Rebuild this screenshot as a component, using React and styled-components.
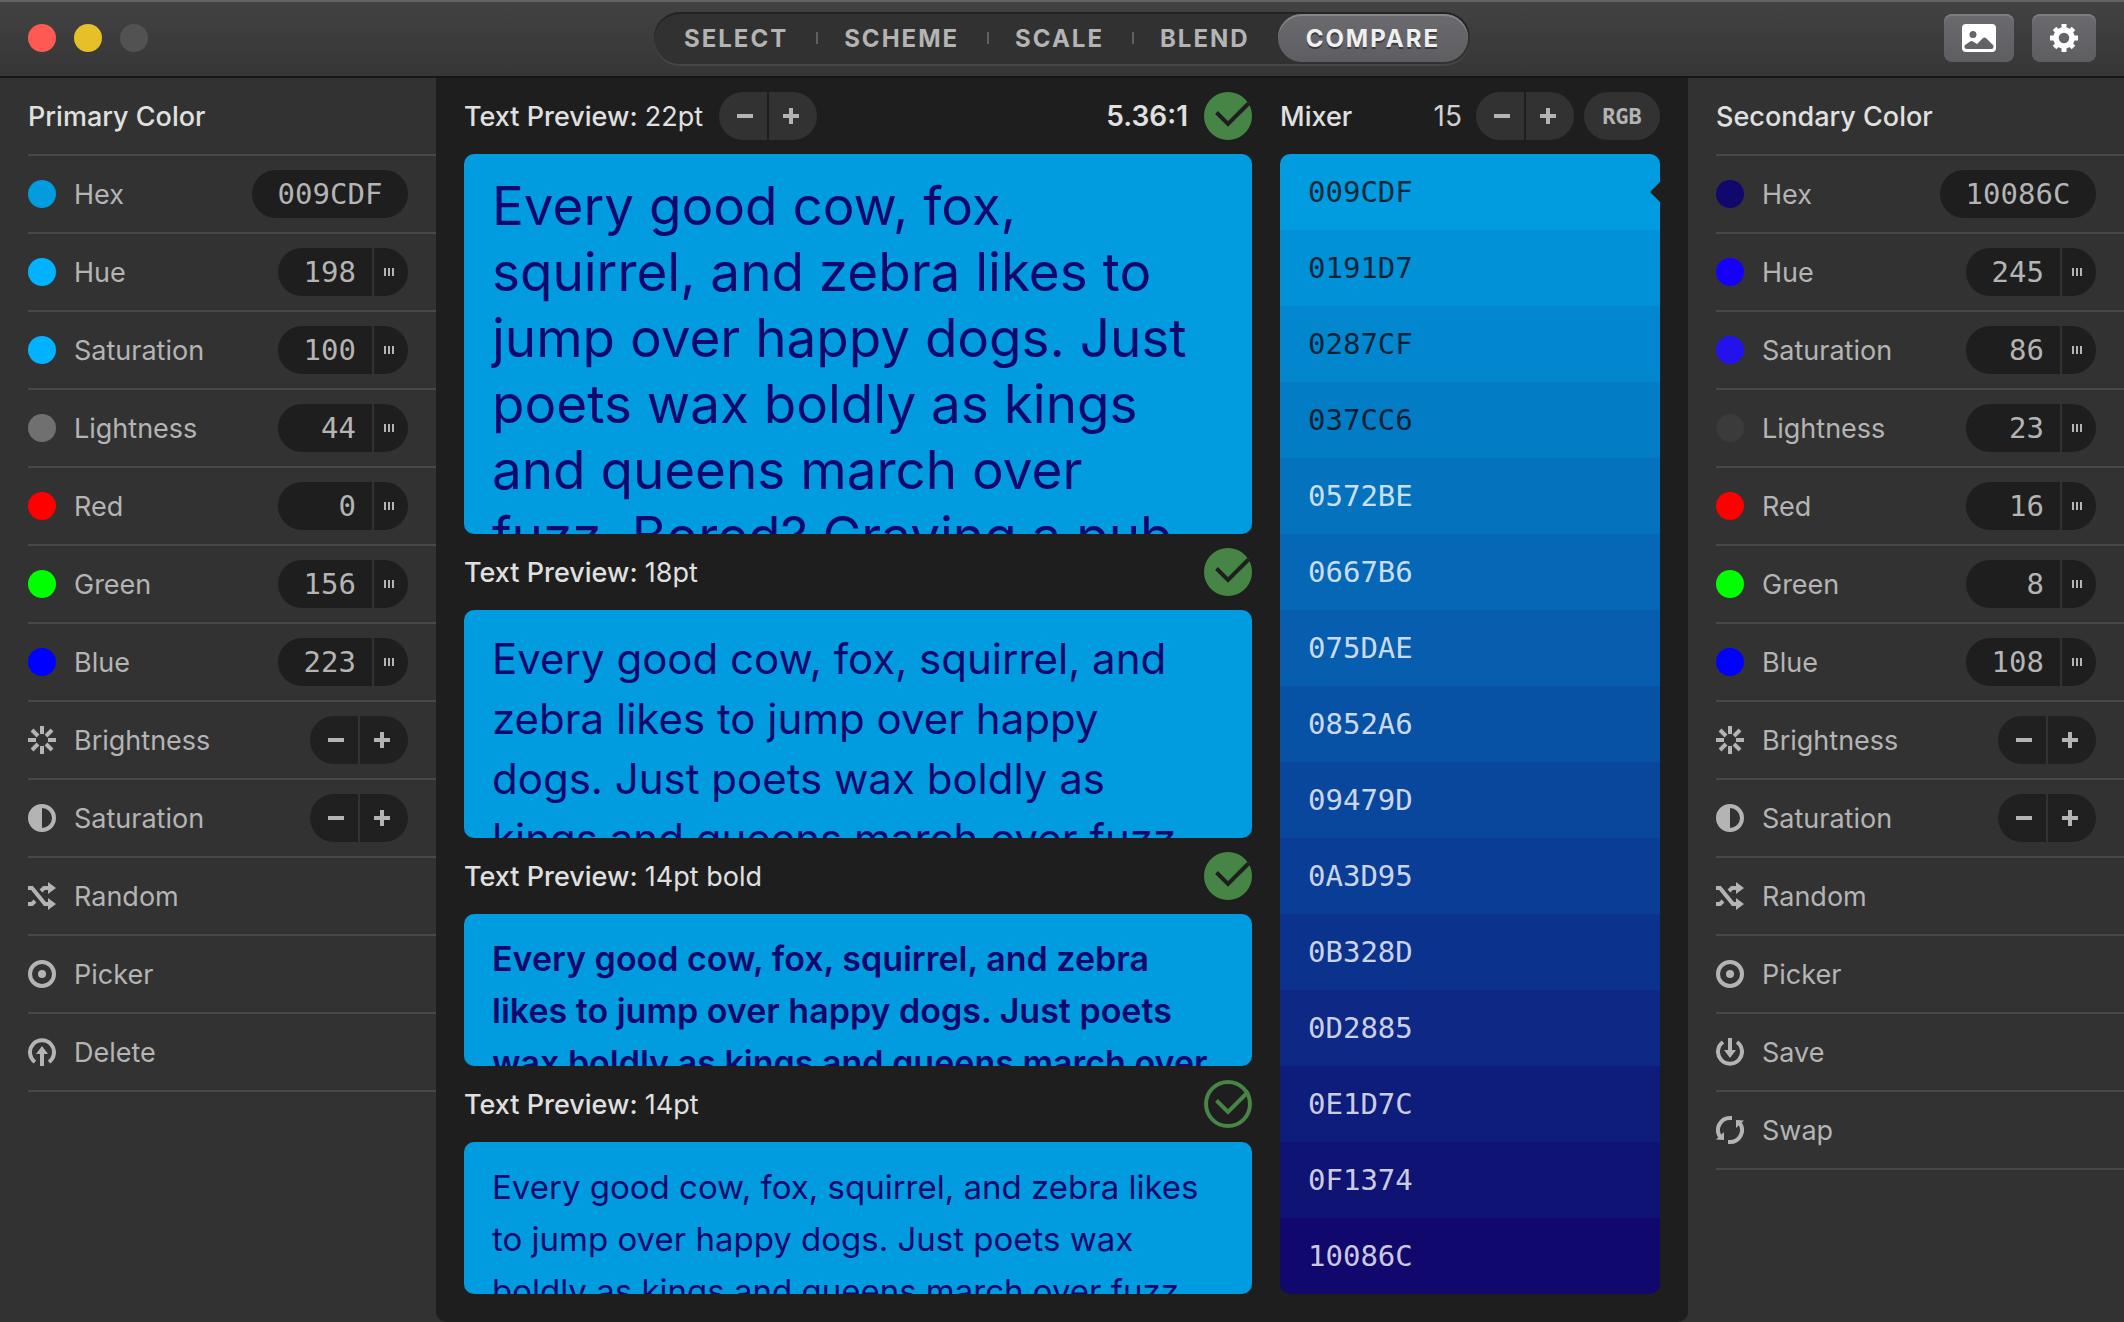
import React from 'react'
import styled, { createGlobalStyle } from "styled-components"

const SANS = `Inter, "Liberation Sans", sans-serif`;
const MONO = `"DejaVu Sans Mono", "Liberation Mono", monospace`;

const previewText = "Every good cow, fox, squirrel, and zebra likes to jump over happy dogs. Just poets wax boldly as kings and queens march over fuzz. Bored? Craving a pub";

const previews = [
  { id: "p22", size: "22pt", grow: 5, font: 53, line: 66, weight: 400, stepper: true, ratio: "5.36:1" },
  { id: "p18", size: "18pt", grow: 3, font: 42, line: 60, weight: 400 },
  { id: "p14b", size: "14pt bold", grow: 2, font: 34, line: 52, weight: 600 },
  { id: "p14", size: "14pt", grow: 2, font: 33, line: 52, weight: 400, outline: true },
];

const mixes = [
  "009CDF", "0191D7", "0287CF", "037CC6", "0572BE", "0667B6", "075DAE", "0852A6",
  "09479D", "0A3D95", "0B328D", "0D2885", "0E1D7C", "0F1374", "10086C",
];

const primary = {
  id: "primary",
  title: "Primary Color",
  hex: "009CDF",
  values: [
    { name: "Hue", value: "198", color: "#00b2ff" },
    { name: "Saturation", value: "100", color: "#00b2ff" },
    { name: "Lightness", value: "44", color: "#707070" },
    { name: "Red", value: "0", color: "#ff0000" },
    { name: "Green", value: "156", color: "#00ff00" },
    { name: "Blue", value: "223", color: "#0000ff" },
  ],
  actions: ["Random", "Picker", "Delete"],
};

const secondary = {
  id: "secondary",
  title: "Secondary Color",
  hex: "10086C",
  values: [
    { name: "Hue", value: "245", color: "#1500ff" },
    { name: "Saturation", value: "86", color: "#2412ed" },
    { name: "Lightness", value: "23", color: "#3b3b3b" },
    { name: "Red", value: "16", color: "#ff0000" },
    { name: "Green", value: "8", color: "#00ff00" },
    { name: "Blue", value: "108", color: "#0000ff" },
  ],
  actions: ["Random", "Picker", "Save", "Swap"],
};

const shapes = {
  Brightness: (
    <g stroke="currentColor" strokeWidth="4">
      <path d="M14 0v8M14 20v8M0 14h8M20 14h8M4 4l6 6M18 18l6 6M24 4l-6 6M10 18l-6 6" />
    </g>
  ),
  Saturation: (
    <g>
      <circle cx="14" cy="14" r="12" fill="none" stroke="currentColor" strokeWidth="4" />
      <path d="M14 1a13 13 0 0 0 0 26z" fill="currentColor" />
    </g>
  ),
  Random: (
    <g>
      <path d="M0 6h4L17 22h4M13 9l3-3h5M0 22h4l3-3" fill="none" stroke="currentColor" strokeWidth="4" />
      <path d="M20 0l8 6-8 6zM20 16l8 6-8 6z" fill="currentColor" />
    </g>
  ),
  Picker: (
    <g>
      <circle cx="14" cy="14" r="12" fill="none" stroke="currentColor" strokeWidth="4" />
      <circle cx="14" cy="14" r="4" fill="currentColor" />
    </g>
  ),
  Delete: (
    <g>
      <path d="M7 24a12 12 0 1 1 14 0" fill="none" stroke="currentColor" strokeWidth="4" />
      <path d="M14 8l6 8h-4v12h-4V16H8z" fill="currentColor" />
    </g>
  ),
  Save: (
    <g>
      <path d="M7 4a12 12 0 1 0 14 0" fill="none" stroke="currentColor" strokeWidth="4" />
      <path d="M14 20l6-8h-4V0h-4v12H8z" fill="currentColor" />
    </g>
  ),
  Swap: (
    <g>
      <path d="M16 2h-2A12 12 0 0 0 4 20.6M12 26h2A12 12 0 0 0 24 7.4" fill="none" stroke="currentColor" strokeWidth="4" />
      <path d="M0 23.500l8-7.500v8zM28 4.500l-8 7.500V4z" fill="currentColor" />
    </g>
  ),
};

const Icon = ({ name }) => (
  <svg width="28" height="28" viewBox="0 0 28 28" aria-hidden="true">{shapes[name]}</svg>
);

const Check = ({ outline }) => (
  <svg width="48" height="48" viewBox="0 0 48 48" role="img" aria-label="Pass">
    {outline
      ? <circle cx="24" cy="24" r="22" fill="none" stroke="#478547" strokeWidth="4" />
      : <circle cx="24" cy="24" r="24" fill="#478547" />}
    <path d="M12.500 20.500L24 32 44.500 11.500" fill="none" stroke={outline ? "#478547" : "#1e1e1e"} strokeWidth="4" />
  </svg>
);

const Stepper = ({ label, light }) => (
  <Pair $light={light}>
    <PairButton aria-label={`Decrease ${label}`}>
      <svg width="16" height="16" viewBox="0 0 16 16"><path d="M0 8h16" stroke="currentColor" strokeWidth="4" /></svg>
    </PairButton>
    <PairButton aria-label={`Increase ${label}`}>
      <svg width="16" height="16" viewBox="0 0 16 16"><path d="M0 8h16M8 0v16" stroke="currentColor" strokeWidth="4" /></svg>
    </PairButton>
  </Pair>
);

const ColorPanel = ({ panel }) => (
  <Sidebar>
    <PanelTitle>{panel.title}</PanelTitle>

    <Row>
      <Dot $color={`#${panel.hex}`} />
      <RowLabel htmlFor={`${panel.id}-hex`}>Hex</RowLabel>
      <HexInput id={`${panel.id}-hex`} defaultValue={panel.hex} />
    </Row>

    {panel.values.map(({ name, value, color }) => (
      <Row key={name}>
        <Dot $color={color} />
        <RowLabel htmlFor={`${panel.id}-${name}`}>{name}</RowLabel>
        <ValueField>
          <ValueInput id={`${panel.id}-${name}`} defaultValue={value} />
          <Grip aria-label={`Drag ${name}`}>
            <svg width="10" height="8" viewBox="0 0 10 8"><path d="M1 0v8M5 0v8M9 0v8" stroke="currentColor" strokeWidth="2" /></svg>
          </Grip>
        </ValueField>
      </Row>
    ))}

    {["Brightness", "Saturation"].map((name) => (
      <Row key={name}>
        <Icon name={name} />
        <RowText>{name}</RowText>
        <Stepper label={name} />
      </Row>
    ))}

    {panel.actions.map((name) => (
      <ActionRow key={name}>
        <Icon name={name} />
        {name}
      </ActionRow>
    ))}
  </Sidebar>
);

const App = () => {
  return (
    <Window>
      <GlobalStyle />

      <Toolbar>
        <Lights>
          <Light aria-label="Close" $color="#ff5a52" />
          <Light aria-label="Minimize" $color="#e6c029" />
          <Light aria-label="Zoom" $color="#525252" />
        </Lights>

        <Tabs>
          <Tab>Select</Tab>
          <Tab>Scheme</Tab>
          <Tab>Scale</Tab>
          <Tab>Blend</Tab>
          <Tab $active>Compare</Tab>
        </Tabs>

        <Tools>
          <ToolButton aria-label="Image" $wide>
            <svg width="34" height="28" viewBox="0 0 34 28">
              <path fillRule="evenodd" fill="#fff" d="M4 0h26a4 4 0 0 1 4 4v20a4 4 0 0 1-4 4H4a4 4 0 0 1-4-4V4a4 4 0 0 1 4-4zM11 7a3.500 3.500 0 1 0 0 7 3.500 3.500 0 0 0 0-7zM5 25h24q2.500 0 2.500-2.500v-1L24 14q-1.500-1-3 0l-6 6-4-2.500q-1.500-1-3 0l-5.500 4v1Q2.500 25 5 25z" />
            </svg>
          </ToolButton>
          <ToolButton aria-label="Settings">
            <svg width="28" height="28" viewBox="0 0 28 28">
              <circle cx="14" cy="14" r="8" fill="none" stroke="#fff" strokeWidth="5.500" />
              <path d="M14 0v5M14 23v5M0 14h5M23 14h5M4.500 4.500l3.500 3.500M20 20l3.500 3.500M23.500 4.500l-3.500 3.500M8 20l-3.500 3.500" stroke="#fff" strokeWidth="5" />
            </svg>
          </ToolButton>
        </Tools>
      </Toolbar>

      <Body>
        <ColorPanel panel={primary} />

        <Main>
          <PreviewColumn>
            {previews.map((p) => (
              <Preview key={p.id} $grow={p.grow}>
                <SectionHead>
                  <Title>Text Preview: <span>{p.size}</span></Title>
                  {p.stepper && <Stepper label="text size" light />}
                  <Spacer />
                  {p.ratio && <Ratio>{p.ratio}</Ratio>}
                  <Check outline={p.outline} />
                </SectionHead>
                <PreviewCard $font={p.font} $line={p.line} $weight={p.weight}>
                  <p>{previewText}</p>
                </PreviewCard>
              </Preview>
            ))}
          </PreviewColumn>

          <MixerColumn>
            <SectionHead>
              <Title>Mixer</Title>
              <Spacer />
              <Count>15</Count>
              <Stepper label="mixer steps" light />
              <ModeButton>RGB</ModeButton>
            </SectionHead>
            <MixList>
              {mixes.map((hex, i) => (
                <Mix key={hex} $color={`#${hex}`} $dark={i < 4}>
                  {hex}
                  {i === 0 && (
                    <svg width="10" height="20" viewBox="0 0 10 20"><path d="M10 0L0 10l10 10z" fill="#1e1e1e" /></svg>
                  )}
                </Mix>
              ))}
            </MixList>
          </MixerColumn>
        </Main>

        <ColorPanel panel={secondary} />
      </Body>
    </Window>
  )
}

const GlobalStyle = createGlobalStyle`
  * {
    box-sizing: border-box;
  }

  body {
    margin: 0;
    background: #323232;
    font-family: ${SANS};
  }

  button, input {
    font: inherit;
    color: inherit;
    border: none;
    background: none;
    padding: 0;
    margin: 0;
  }

  svg {
    display: block;
    flex-shrink: 0;
  }
`;

const Window = styled.div`
  min-height: 100vh;
  display: flex;
  flex-direction: column;
  color: #b4b4b4;
  font-size: 27px;
`;

const Toolbar = styled.header`
  height: 78px;
  flex-shrink: 0;
  display: grid;
  grid-template-columns: 1fr auto 1fr;
  align-items: center;
  padding: 0 28px 2px;
  background: linear-gradient(#424242, #363636);
  border-top: 2px solid #636363;
  border-bottom: 2px solid #161616;
`;

const Lights = styled.div`
  display: flex;
  gap: 18px;
`;

const Light = styled.button`
  width: 28px;
  height: 28px;
  border-radius: 50%;
  background: ${({ $color }) => $color};
`;

const Tabs = styled.nav`
  display: flex;
  align-items: center;
  padding: 2px;
  border-radius: 26px;
  background: #313131;
  box-shadow: inset 0 2px 0 #232323, 0 2px 0 #454545;
`;

const Tab = styled.button`
  position: relative;
  height: 48px;
  padding: 0 28px;
  border-radius: 24px;
  font-size: 24px;
  font-weight: 700;
  letter-spacing: 2px;
  text-transform: uppercase;

  & + &::before {
    content: "";
    position: absolute;
    left: 0;
    top: 18px;
    width: 2px;
    height: 12px;
    background: #606060;
  }

  ${({ $active }) => $active && `
    color: #f0f0f0;
    background: linear-gradient(#6b6b6f, #5e5e62);
    box-shadow: inset 0 2px 0 #85858a;
    text-shadow: 0 2px 0 #3a3a3c;

    &&::before {
      display: none;
    }
  `}
`;

const Tools = styled.div`
  display: flex;
  justify-content: flex-end;
  gap: 18px;
`;

const ToolButton = styled.button`
  width: ${({ $wide }) => ($wide ? "70px" : "64px")};
  height: 48px;
  display: flex;
  align-items: center;
  justify-content: center;
  border-radius: 8px;
  background: linear-gradient(#6b6b6f, #5e5e62);
  box-shadow: inset 0 2px 0 #7c7c81;
`;

const Body = styled.div`
  flex: 1;
  display: flex;
`;

const Sidebar = styled.aside`
  width: 436px;
  flex-shrink: 0;
  padding-left: 28px;
`;

const PanelTitle = styled.h2`
  height: 78px;
  margin: 0;
  display: flex;
  align-items: center;
  border-bottom: 2px solid #484848;
  color: #e0e0e0;
  font-size: 27px;
  font-weight: 500;
`;

const Row = styled.div`
  height: 78px;
  display: flex;
  align-items: center;
  gap: 18px;
  padding-right: 28px;
  border-bottom: 2px solid #484848;
`;

const ActionRow = styled.button`
  width: 100%;
  height: 78px;
  display: flex;
  align-items: center;
  gap: 18px;
  border-bottom: 2px solid #484848;
`;

const Dot = styled.span`
  width: 28px;
  height: 28px;
  border-radius: 50%;
  background: ${({ $color }) => $color};
`;

const RowLabel = styled.label`
  flex: 1;
`;

const RowText = styled.span`
  flex: 1;
`;

const HexInput = styled.input`
  width: 156px;
  height: 48px;
  border-radius: 24px;
  background: #1e1e1e;
  font-family: ${MONO};
  font-size: 29px;
  text-align: center;
`;

const ValueField = styled.div`
  display: flex;
  gap: 2px;
  height: 48px;
  border-radius: 24px;
  overflow: hidden;
`;

const ValueInput = styled.input`
  width: 94px;
  padding-right: 16px;
  background: #1e1e1e;
  font-family: ${MONO};
  font-size: 29px;
  text-align: right;
`;

const Grip = styled.button`
  width: 34px;
  padding-left: 10px;
  background: #1e1e1e;
`;

const Pair = styled.div`
  display: flex;
  gap: 2px;
  height: 48px;
  border-radius: 24px;
  overflow: hidden;

  button {
    background: ${({ $light }) => ($light ? "#323232" : "#202020")};
  }
`;

const PairButton = styled.button`
  width: 48px;
  display: flex;
  align-items: center;
  padding-left: 18px;

  & + & {
    padding-left: 14px;
  }
`;

const Main = styled.main`
  flex: 1;
  display: flex;
  gap: 28px;
  padding: 0 28px 28px;
  background: #1e1e1e;
  border-radius: 0 0 10px 10px;
`;

const PreviewColumn = styled.section`
  flex: 1;
  display: flex;
  flex-direction: column;
`;

const Preview = styled.article`
  flex: ${({ $grow }) => $grow} 0 76px;
  display: flex;
  flex-direction: column;
`;

const SectionHead = styled.div`
  height: 76px;
  flex-shrink: 0;
  display: flex;
  align-items: center;
`;

const Title = styled.h2`
  margin: 0 16px 0 0;
  color: #e0e0e0;
  font-size: 27px;
  font-weight: 500;

  span {
    font-weight: 400;
  }
`;

const Spacer = styled.div`
  flex: 1;
`;

const Ratio = styled.strong`
  margin-right: 16px;
  color: #e0e0e0;
  font-size: 28px;
  font-weight: 600;
`;

const Count = styled.span`
  margin-right: 14px;
  color: #d0d0d0;
  font-size: 28px;
`;

const ModeButton = styled.button`
  width: 76px;
  height: 48px;
  margin-left: 10px;
  border-radius: 24px;
  background: #323232;
  font-family: ${MONO};
  font-size: 22px;
  font-weight: 700;
`;

const PreviewCard = styled.div`
  flex: 1 1 0;
  min-height: 0;
  padding: 19px 36px 0 28px;
  border-radius: 10px;
  overflow: hidden;
  background: #009cdf;
  color: #10086c;
  font-size: ${({ $font }) => $font}px;
  line-height: ${({ $line }) => $line}px;
  font-weight: ${({ $weight }) => $weight};

  p {
    height: 0;
    margin: 0;
  }
`;

const MixerColumn = styled.section`
  width: 380px;
  flex-shrink: 0;
  display: flex;
  flex-direction: column;
`;

const MixList = styled.div`
  flex: 1;
  display: flex;
  flex-direction: column;
  border-radius: 10px;
  overflow: hidden;
`;

const Mix = styled.button`
  flex: 1;
  display: flex;
  align-items: center;
  justify-content: space-between;
  padding-left: 28px;
  background: ${({ $color }) => $color};
  color: ${({ $dark }) => ($dark ? "rgba(0, 0, 0, 0.75)" : "rgba(255, 255, 255, 0.8)")};
  font-family: ${MONO};
  font-size: 29px;
`;

export default App;
